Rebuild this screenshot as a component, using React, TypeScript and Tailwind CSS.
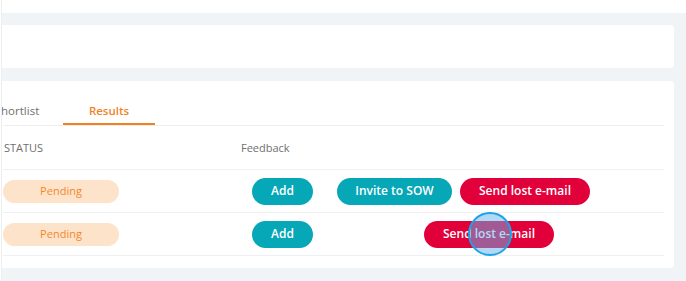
import React from "react"

type Row = {
  status: string
  actions: { label: string; kind: "teal" | "red"; width: string }[]
  offset: string
}

const rows: Row[] = [
  {
    status: "Pending",
    offset: "ml-0",
    actions: [
      { label: "Invite to SOW", kind: "teal", width: "w-[115px]" },
      { label: "Send lost e-mail", kind: "red", width: "w-[130px]" },
    ],
  },
  {
    status: "Pending",
    offset: "ml-[87px]",
    actions: [{ label: "Send lost e-mail", kind: "red", width: "w-[130px]" }],
  },
]

function PillButton({ label, kind, width }: { label: string; kind: "teal" | "red"; width: string }) {
  const color = kind === "teal" ? "bg-[#06a7b6]" : "bg-[#e2003b]"
  return (
    <button
      className={`${color} ${width} h-[27px] rounded-full text-white text-[12px] font-semibold leading-none flex items-center justify-center`}
    >
      {label}
    </button>
  )
}

export default function App() {
  return (
    <div
      className="relative w-[686px] h-[281px] bg-white flex overflow-hidden"
      style={{ fontFamily: '"Open Sans", "Liberation Sans", sans-serif' }}
    >
      <div className="w-[2px] shrink-0 border-r border-[#eceef0] bg-white" />

      <div className="flex-1 flex flex-col">
        <div className="h-[13px] bg-white" />
        <div className="flex-1 bg-[#f1f4f7] pt-[12px] pr-[12px] flex flex-col gap-[13px]">
          <div className="h-[43px] bg-white rounded-r-[4px]" />

          <div className="h-[187px] bg-white rounded-r-[4px] pt-[17px] pl-[1px] pr-[10px] overflow-hidden">
            {/* tabs */}
            <div className="relative flex border-b border-[#eceef0] h-[28px]">
              <div className="w-[92px] ml-[-32px] h-full flex items-start justify-center text-[11.5px] text-[#6f6f6f] leading-[26px]">
                Shortlist
              </div>
              <div className="w-[92px] h-full flex items-start justify-center text-[11.5px] font-semibold text-[#f2821f] leading-[26px] border-b-2 border-[#f2821f] mb-[-1px]">
                Results
              </div>
            </div>

            {/* header */}
            <div className="grid grid-cols-[238px_96px_1fr] h-[44px] items-center border-b border-[#eef0f2] text-[11px] text-[#6f6f6f]">
              <div className="pl-[1px] pt-[2px]">STATUS</div>
              <div className="pt-[2px]">Feedback</div>
              <div />
            </div>

            {rows.map((row, i) => (
              <div
                key={i}
                className="grid grid-cols-[238px_96px_1fr] h-[43px] items-center border-b border-[#eef0f2]"
              >
                <div>
                  <span className="w-[116px] h-[23px] rounded-full bg-[#fee3cb] text-[#f2892c] text-[11px] flex items-center justify-center">
                    {row.status}
                  </span>
                </div>
                <div className="pl-[11px]">
                  <PillButton label="Add" kind="teal" width="w-[61px]" />
                </div>
                <div className={`flex gap-[8px] ${row.offset}`}>
                  {row.actions.map((a) => (
                    <PillButton key={a.label} {...a} />
                  ))}
                </div>
              </div>
            ))}
          </div>
        </div>
      </div>

      {/* touch cursor overlay */}
      <div className="absolute left-[468px] top-[212px] w-[44px] h-[44px] rounded-full border-2 border-[#1ba2e6] bg-[#5fb4ee]/50" />
    </div>
  )
}
